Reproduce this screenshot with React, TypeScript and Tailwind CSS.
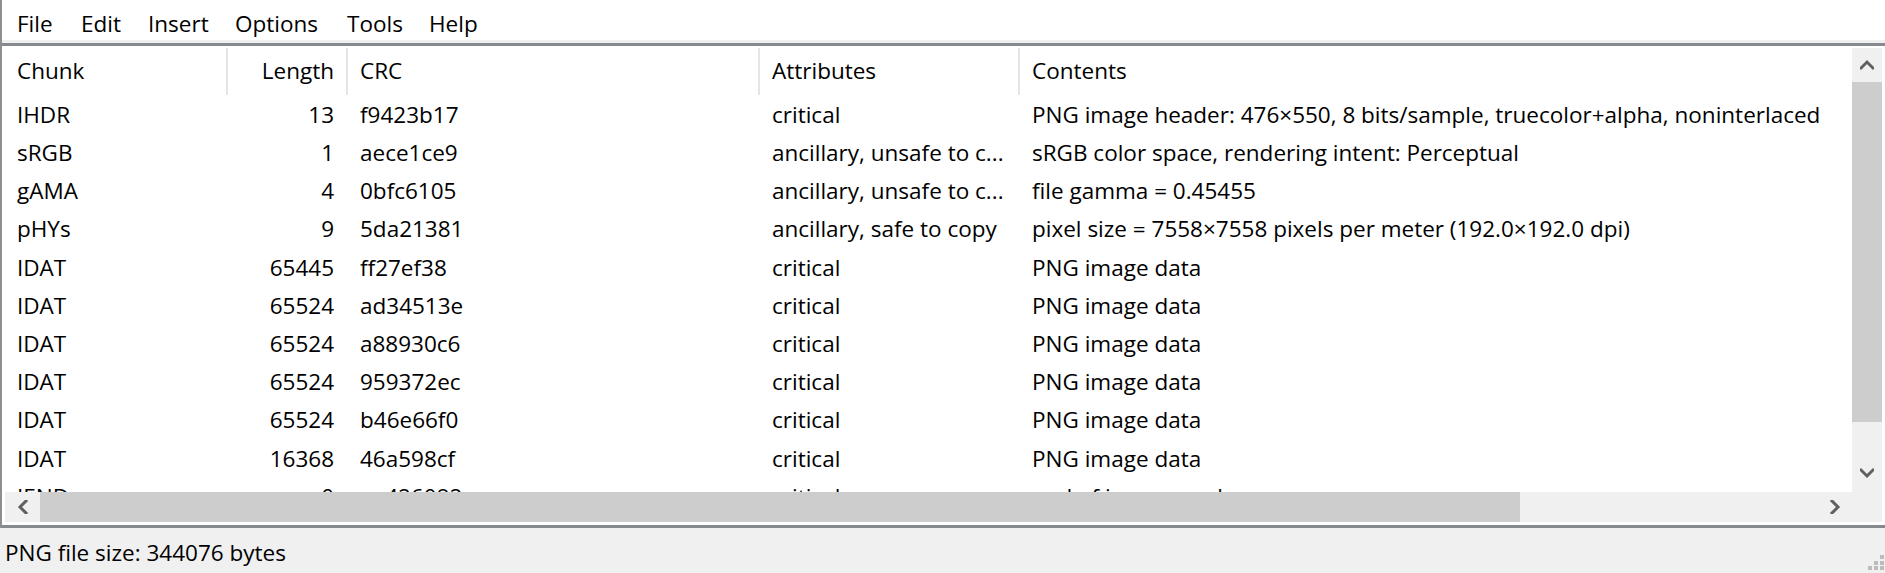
import React from 'react';

const COLS = [
  { w: 'w-[223px]', align: 'text-left' },
  { w: 'w-[120px]', align: 'text-right' },
  { w: 'w-[412px]', align: 'text-left' },
  { w: 'w-[260px]', align: 'text-left' },
];

const HEADERS = ['Chunk', 'Length', 'CRC', 'Attributes', 'Contents'];

const ROWS: string[][] = [
  ['IHDR', '13', 'f9423b17', 'critical', 'PNG image header: 476×550, 8 bits/sample, truecolor+alpha, noninterlaced'],
  ['sRGB', '1', 'aece1ce9', 'ancillary, unsafe to c...', 'sRGB color space, rendering intent: Perceptual'],
  ['gAMA', '4', '0bfc6105', 'ancillary, unsafe to c...', 'file gamma = 0.45455'],
  ['pHYs', '9', '5da21381', 'ancillary, safe to copy', 'pixel size = 7558×7558 pixels per meter (192.0×192.0 dpi)'],
  ['IDAT', '65445', 'ff27ef38', 'critical', 'PNG image data'],
  ['IDAT', '65524', 'ad34513e', 'critical', 'PNG image data'],
  ['IDAT', '65524', 'a88930c6', 'critical', 'PNG image data'],
  ['IDAT', '65524', '959372ec', 'critical', 'PNG image data'],
  ['IDAT', '65524', 'b46e66f0', 'critical', 'PNG image data'],
  ['IDAT', '16368', '46a598cf', 'critical', 'PNG image data'],
  ['IEND', '0', 'ae426082', 'critical', 'end of image marker'],
];

const MENU = [
  { label: 'File', w: 'w-[64px]' },
  { label: 'Edit', w: 'w-[67px]' },
  { label: 'Insert', w: 'w-[87px]' },
  { label: 'Options', w: 'w-[112px]' },
  { label: 'Tools', w: 'w-[82px]' },
  { label: 'Help', w: 'w-[70px]' },
];

// small pixel-ish chevron used by the scrollbar buttons
const Chevron: React.FC<{ dir: 'up' | 'down' | 'left' | 'right' }> = ({ dir }) => {
  const rot = { up: 0, right: 90, down: 180, left: 270 }[dir];
  return (
    <svg width="14" height="14" viewBox="0 0 14 14" style={{ transform: `rotate(${rot}deg)` }}>
      <polyline points="1,10 7,4 13,10" fill="none" stroke="#606060" strokeWidth="3" strokeLinejoin="miter" strokeLinecap="square" />
    </svg>
  );
};

const Cell: React.FC<{ i: number; header?: boolean; children: React.ReactNode }> = ({ i, header, children }) => {
  const col = COLS[i];
  const border = header ? 'border-[#e5e5e5]' : 'border-transparent';
  if (!col) {
    return <div className="flex-1 pl-[12px] whitespace-nowrap">{children}</div>;
  }
  return (
    <div className={`${col.w} ${col.align} shrink-0 border-r-2 ${border} ${i === 1 ? 'pr-[12px]' : 'pl-[12px]'} whitespace-nowrap`}>
      {children}
    </div>
  );
};

export default function App() {
  return (
    <div className="w-[1885px] h-[573px] overflow-hidden flex flex-col bg-[#f0f0f0] text-black font-['Open_Sans',sans-serif] text-[22.5px] leading-none">
      <div className="flex flex-col border-l-2 border-[#8e8e8e]">
        {/* menu bar */}
        <div className="h-[40px] bg-white flex items-center pl-[15px] pt-[8px]">
          {MENU.map((m) => (
            <span key={m.label} className={`${m.w} shrink-0`}>{m.label}</span>
          ))}
        </div>
        <div className="h-[3px] bg-[#f0f0f0]" />

        {/* chunk list */}
        <div className="bg-white border-y-[3px] border-[#868a8f] pt-[2px] pb-[3px] pl-[3px] pr-[3px] flex">
          <div className="flex-1 flex flex-col min-w-0">
            <div className="h-[444px] overflow-hidden flex flex-col">
              <div className="h-[47px] flex items-stretch shrink-0">
                {HEADERS.map((h, i) => (
                  <Cell key={h} i={i} header>
                    <div className="h-full flex items-center">
                      <span className={i === 1 ? 'ml-auto' : ''}>{h}</span>
                    </div>
                  </Cell>
                ))}
              </div>
              <div className="h-[1px] shrink-0" />
              {ROWS.map((r, ri) => (
                <div key={ri} className="h-[38.2px] flex items-center shrink-0">
                  {r.map((v, i) => (
                    <Cell key={i} i={i}>{v}</Cell>
                  ))}
                </div>
              ))}
            </div>
            {/* horizontal scrollbar */}
            <div className="h-[30px] flex bg-[#f0f0f0]">
              <div className="w-[35px] flex items-center justify-center"><Chevron dir="left" /></div>
              <div className="w-[1480px] bg-[#cdcdcd]" />
              <div className="flex-1" />
              <div className="w-[35px] flex items-center justify-center"><Chevron dir="right" /></div>
            </div>
          </div>
          {/* vertical scrollbar */}
          <div className="w-[30px] flex flex-col bg-[#f0f0f0]">
            <div className="h-[34px] flex items-center justify-center"><Chevron dir="up" /></div>
            <div className="h-[340px] bg-[#cdcdcd]" />
            <div className="h-[34px]" />
            <div className="h-[34px] flex items-center justify-center"><Chevron dir="down" /></div>
            <div className="h-[32px]" />
          </div>
        </div>
      </div>

      {/* status bar */}
      <div className="flex-1 relative flex items-center pl-[5px] pt-[6px]">
        <span>PNG file size: 344076 bytes</span>
        <svg className="absolute right-0 bottom-[3px]" width="18" height="16" viewBox="0 0 18 16">
          <rect x="13" y="1" width="4" height="4" fill="#bcbcbc" />
          <rect x="7" y="7" width="4" height="4" fill="#bcbcbc" />
          <rect x="13" y="7" width="4" height="4" fill="#bcbcbc" />
          <rect x="1" y="12" width="4" height="4" fill="#bcbcbc" />
          <rect x="7" y="12" width="4" height="4" fill="#bcbcbc" />
          <rect x="13" y="12" width="4" height="4" fill="#bcbcbc" />
        </svg>
      </div>
    </div>
  );
}
